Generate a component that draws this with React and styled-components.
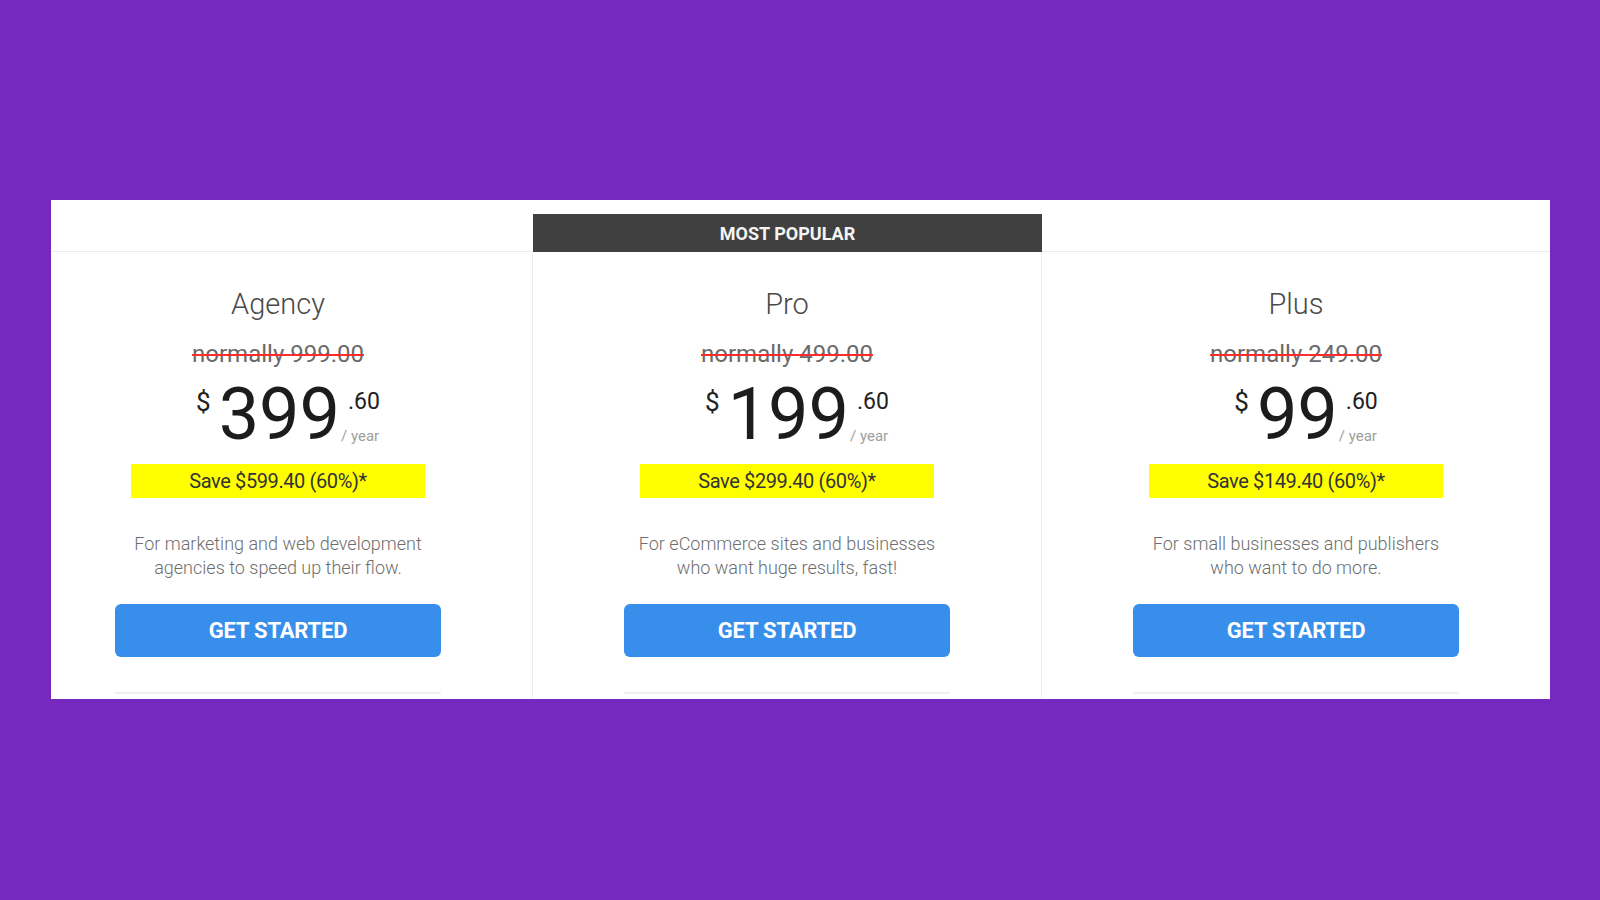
import React from "react";
import styled, { createGlobalStyle } from "styled-components";

const GlobalStyle = createGlobalStyle`
  html, body {
    margin: 0;
    padding: 0;
    background: #7629bf;
    font-family: Roboto, "Liberation Sans", Arial, sans-serif;
  }
  #root {
    min-height: 900px;
  }
`;

const Page = styled.div`
  padding: 200px 0 0 51px;
`;

const Panel = styled.div`
  width: 1499px;
  height: 499px;
  background: #ffffff;
  overflow: hidden;
`;

const Track = styled.div`
  display: flex;
  margin-left: -27px;
`;

const Column = styled.div`
  flex: none;
  width: 509px;
  display: flex;
  flex-direction: column;
`;

const Head = styled.div`
  height: 52px;
  box-sizing: border-box;
  border-bottom: 1px solid #ebebeb;
  display: flex;
  align-items: flex-end;
`;

const Badge = styled.div`
  width: 100%;
  height: 38px;
  margin-bottom: -1px;
  background: #404040;
  color: #f4f4f4;
  font-size: 18px;
  font-weight: 700;
  display: flex;
  align-items: center;
  justify-content: center;
`;

const Body = styled.div`
  height: 460px;
  box-sizing: border-box;
  border-right: 1px solid #ececec;
  padding-top: 35px;
  display: flex;
  flex-direction: column;
  align-items: center;
`;

const Title = styled.div`
  font-size: 29px;
  line-height: 34px;
  font-weight: 300;
  color: #4a4a4a;
`;

const Normally = styled.div`
  margin-top: 18px;
  font-size: 24px;
  line-height: 30px;
  color: #6a6a6a;
  text-decoration: line-through;
  text-decoration-color: #ff2a2a;
  text-decoration-thickness: 2px;
`;

const PriceRow = styled.div`
  margin-top: 10px;
  height: 72px;
  display: flex;
  align-items: flex-start;
  padding-left: 20px;
`;

const Currency = styled.span`
  font-size: 26px;
  line-height: 26px;
  margin-top: 10px;
  margin-right: 8px;
  color: #222;
`;

const Amount = styled.span`
  font-size: 72px;
  line-height: 72px;
  color: #1c1c1c;
`;

const Side = styled.div`
  display: flex;
  flex-direction: column;
  margin-top: 11px;
  margin-left: 1px;
`;

const Cents = styled.span`
  font-size: 23px;
  line-height: 23px;
  padding-left: 7px;
  color: #222;
`;

const Period = styled.span`
  margin-top: 16px;
  font-size: 15px;
  line-height: 15px;
  color: #a0a0a0;
`;

const SaveBar = styled.div`
  margin-top: 13px;
  width: 294px;
  height: 34px;
  background: #ffff00;
  color: #333;
  font-size: 20px;
  line-height: 34px;
  letter-spacing: -0.4px;
  text-align: center;
`;

const Description = styled.p`
  margin: 34px 0 0;
  font-size: 18px;
  line-height: 24px;
  font-weight: 300;
  color: #6e6e6e;
  text-align: center;
`;

const Button = styled.button`
  margin-top: 24px;
  width: 326px;
  height: 53px;
  border: none;
  border-radius: 6px;
  background: #388eeb;
  color: #ffffff;
  font-family: inherit;
  font-size: 22px;
  font-weight: 700;
  letter-spacing: -0.2px;
  cursor: pointer;
`;

const Divider = styled.div`
  margin-top: 35px;
  width: 326px;
  height: 2px;
  background: #f0f0f0;
`;

const plans = [
  {
    name: "Agency",
    normally: "999.00",
    price: "399",
    save: "$599.40",
    desc: ["For marketing and web development", "agencies to speed up their flow."],
  },
  {
    name: "Pro",
    normally: "499.00",
    price: "199",
    save: "$299.40",
    desc: ["For eCommerce sites and businesses", "who want huge results, fast!"],
    popular: true,
  },
  {
    name: "Plus",
    normally: "249.00",
    price: "99",
    save: "$149.40",
    desc: ["For small businesses and publishers", "who want to do more."],
  },
];

export default function App() {
  return (
    <>
      <GlobalStyle />
      <Page>
        <Panel>
          <Track>
            {plans.map((p) => (
              <Column key={p.name}>
                <Head>{p.popular && <Badge>MOST POPULAR</Badge>}</Head>
                <Body>
                  <Title>{p.name}</Title>
                  <Normally>normally {p.normally}</Normally>
                  <PriceRow>
                    <Currency>$</Currency>
                    <Amount>{p.price}</Amount>
                    <Side>
                      <Cents>.60</Cents>
                      <Period>/ year</Period>
                    </Side>
                  </PriceRow>
                  <SaveBar>Save {p.save} (60%)*</SaveBar>
                  <Description>
                    {p.desc[0]}
                    <br />
                    {p.desc[1]}
                  </Description>
                  <Button>GET STARTED</Button>
                  <Divider />
                </Body>
              </Column>
            ))}
          </Track>
        </Panel>
      </Page>
    </>
  );
}
